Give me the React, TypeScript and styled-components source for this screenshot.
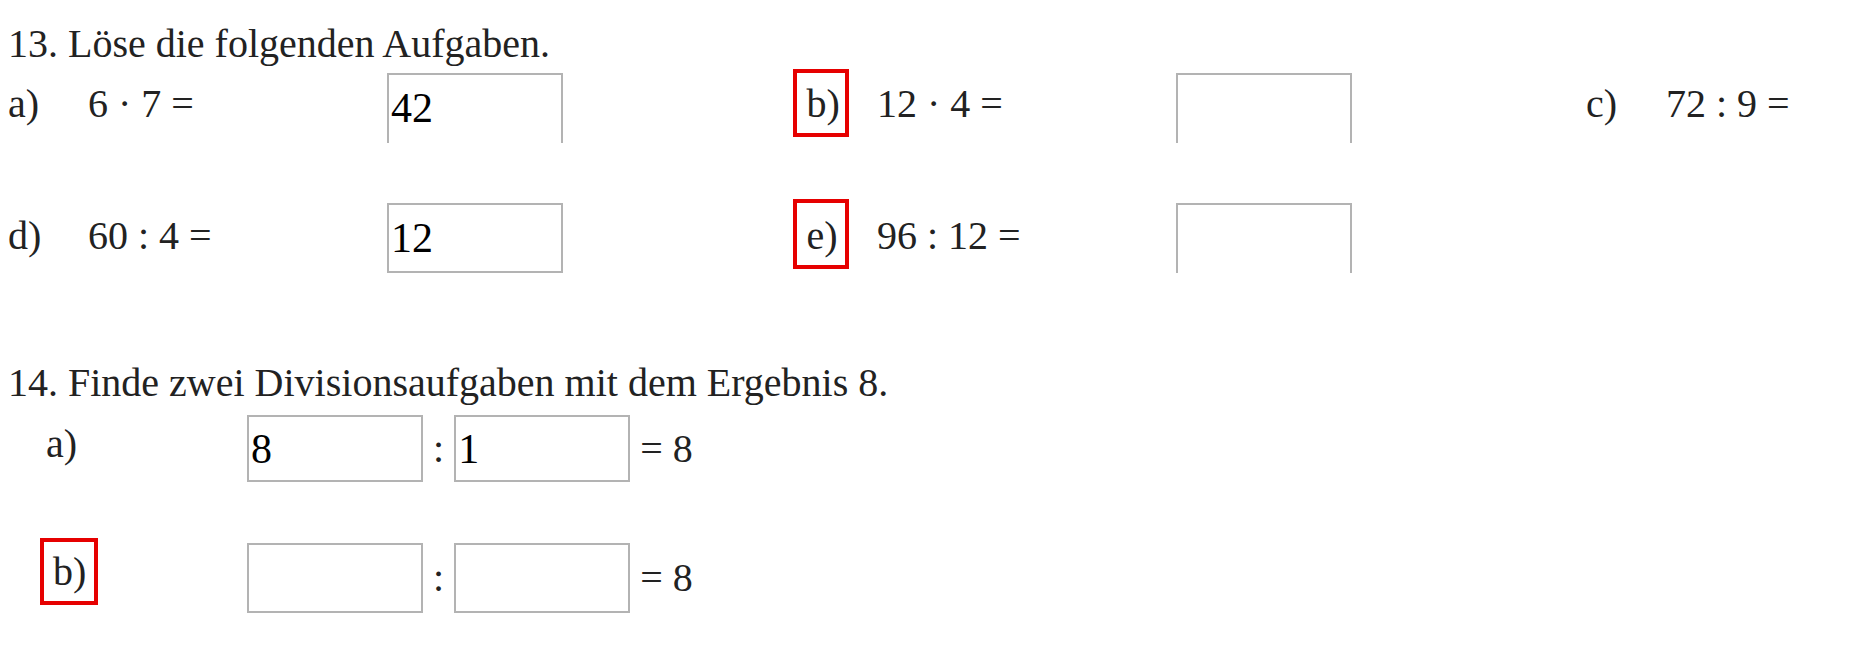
import React from "react";
import styled, { createGlobalStyle, css } from "styled-components";

const SERIF = `"Liberation Serif", "Times New Roman", Times, serif`;

const Global = createGlobalStyle`
  html, body {
    margin: 0;
    padding: 0;
    background: #ffffff;
    overflow: hidden;
  }
  body {
    font-family: ${SERIF};
    color: #222222;
  }
`;

const Page = styled.main`
  padding: 21px 0 0 8px;
  font-family: ${SERIF};
  font-size: 40px;
  line-height: 46px;
  overflow: hidden;
  min-height: 651px;
  box-sizing: border-box;
`;

const Heading = styled.h2<{ $gap: number }>`
  margin: ${(p) => p.$gap}px 0 0;
  font: inherit;
  line-height: 46px;
  white-space: nowrap;
`;

const TaskGrid = styled.div`
  display: grid;
  grid-template-columns: repeat(3, 789px);
  row-gap: 60px;
  margin-top: 6px;
`;

const Task = styled.div`
  display: grid;
  grid-template-columns: 80px 299px 176px;
  align-items: start;
`;

type Mark = { x: number; y: number; w: number; h: number; pad: number };

const Label = styled.span<{ $drop: number; $mark?: Mark }>`
  display: block;
  white-space: nowrap;
  padding-top: ${(p) => p.$drop}px;
  ${(p) =>
    p.$mark &&
    css`
      box-sizing: border-box;
      width: ${p.$mark.w}px;
      height: ${p.$mark.h}px;
      margin: ${-p.$mark.y}px 0 0 ${-p.$mark.x}px;
      padding-top: ${p.$drop + p.$mark.y - 4}px;
      padding-left: ${p.$mark.x - 4 + p.$mark.pad}px;
      border: 4px solid #e60000;
    `}
`;

const Expr = styled.span<{ $drop: number }>`
  display: block;
  white-space: nowrap;
  padding-top: ${(p) => p.$drop}px;
`;

const Answer = styled.span<{ $h: number; $cut?: boolean }>`
  box-sizing: border-box;
  display: flex;
  align-items: center;
  flex: none;
  width: 176px;
  height: ${(p) => p.$h}px;
  padding: 0 2px;
  border: 2px solid #b3b3b3;
  background: #ffffff;
  font-family: ${SERIF};
  font-size: 42px;
  line-height: normal;
  color: #000000;
  overflow: hidden;
  white-space: nowrap;
  ${(p) =>
    p.$cut &&
    css`
      border-bottom: none;
      padding-bottom: 2px;
    `}
`;

const PairRow = styled.div<{ $gap: number }>`
  display: flex;
  align-items: center;
  margin-top: ${(p) => p.$gap}px;
  padding-left: 38px;
`;

const PairLabelCell = styled.div`
  flex: none;
  width: 201px;
  align-self: flex-start;
`;

const Sep = styled.span`
  padding: 0 10px;
`;

const Result = styled.span`
  margin-left: 10px;
  white-space: nowrap;
`;

type TaskData = {
  label: string;
  expr: string;
  value: string;
  drop: number;
  markH?: number;
  cut?: boolean;
};

const tasks: TaskData[] = [
  { label: "a)", expr: "6 · 7 =", value: "42", drop: 8, cut: true },
  { label: "b)", expr: "12 · 4 =", value: "", drop: 8, markH: 68, cut: true },
  { label: "c)", expr: "72 : 9 =", value: "", drop: 8, cut: true },
  { label: "d)", expr: "60 : 4 =", value: "12", drop: 10 },
  { label: "e)", expr: "96 : 12 =", value: "", drop: 10, markH: 70, cut: true },
];

type PairData = { label: string; a: string; b: string; h: number; gap: number; marked?: boolean };

const pairs: PairData[] = [
  { label: "a)", a: "8", b: "1", h: 67, gap: 9 },
  { label: "b)", a: "", b: "", h: 70, gap: 61, marked: true },
];

const mark14: Mark = { x: 6, y: 5, w: 58, h: 67, pad: 7 };

export default function App() {
  return (
    <>
      <Global />
      <Page>
        <section>
          <Heading $gap={0}>13. Löse die folgenden Aufgaben.</Heading>
          <TaskGrid>
            {tasks.map((t) => (
              <Task key={t.label}>
                <Label
                  $drop={t.drop}
                  $mark={t.markH ? { x: 4, y: 4, w: 56, h: t.markH, pad: 9.5 } : undefined}
                >
                  {t.label}
                </Label>
                <Expr $drop={t.drop}>{t.expr}</Expr>
                <Answer $h={70} $cut={t.cut} role="textbox" aria-readonly="true" aria-label={t.label}>
                  {t.value}
                </Answer>
              </Task>
            ))}
          </TaskGrid>
        </section>
        <section>
          <Heading $gap={87}>14. Finde zwei Divisionsaufgaben mit dem Ergebnis 8.</Heading>
          {pairs.map((p) => (
            <PairRow key={p.label} $gap={p.gap}>
              <PairLabelCell>
                <Label $drop={6} $mark={p.marked ? mark14 : undefined}>
                  {p.label}
                </Label>
              </PairLabelCell>
              <Answer $h={p.h} role="textbox" aria-readonly="true" aria-label={`${p.label} Dividend`}>
                {p.a}
              </Answer>
              <Sep>:</Sep>
              <Answer $h={p.h} role="textbox" aria-readonly="true" aria-label={`${p.label} Divisor`}>
                {p.b}
              </Answer>
              <Result>= 8</Result>
            </PairRow>
          ))}
        </section>
      </Page>
    </>
  );
}
